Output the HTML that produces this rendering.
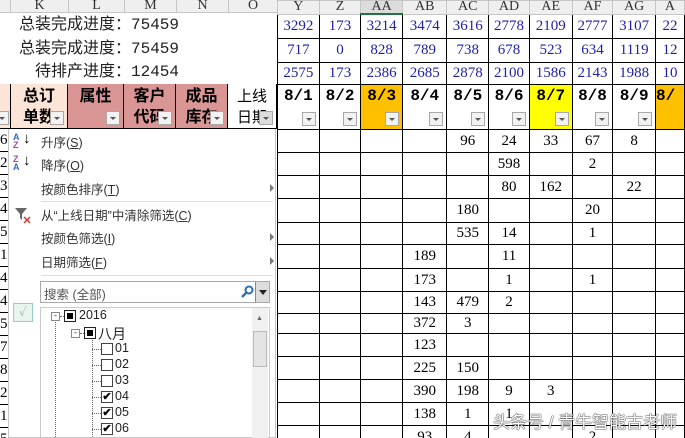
<!DOCTYPE html>
<html style="overflow:hidden;height:438px"><head><meta charset="utf-8"><style>
*{margin:0;padding:0;box-sizing:border-box}
html,body{overflow:hidden}
body{width:685px;height:438px;background:#fff;position:relative;font-family:"Liberation Serif","Noto Serif CJK SC",serif}
.a{position:absolute}
table{border-collapse:collapse;position:absolute;left:277px;top:0;table-layout:fixed}
td{border:1px solid #000;text-align:center;font-size:15px;line-height:16px;padding:0;white-space:nowrap;overflow:hidden;position:relative;color:#000}
tr.h td{background:#efefef;border:1px solid #c6c6c6;color:#333;font-size:14px;line-height:12px}
tr.b td{color:#1f1fa8}
tr.hd td{font-weight:bold;font-size:16px;vertical-align:top;padding-top:3px;font-family:"Liberation Mono","Noto Sans CJK SC",monospace}
.dd{position:absolute;right:3px;bottom:3px;width:14px;height:14px;background:#f2f2f2;border:1px solid #a8a8a8}
.dd:after{content:"";position:absolute;left:3px;top:5px;border-left:3px solid transparent;border-right:3px solid transparent;border-top:3px solid #555}
.lh{font-family:"Liberation Sans","Noto Sans CJK SC",sans-serif;font-size:16px;font-weight:bold;text-align:center;line-height:21px;padding-top:2px;border-right:1px solid #000;border-bottom:1px solid #000;overflow:hidden;white-space:nowrap}
.mi{position:absolute;left:32px;font-family:"Liberation Sans","Noto Sans CJK SC",sans-serif;font-size:12.5px;color:#333}
.ar{position:absolute;left:261px;width:0;height:0;border-top:4px solid transparent;border-bottom:4px solid transparent;border-left:4px solid #777}
.cb{position:absolute;width:12px;height:12px;border:1px solid #444;background:#fff;font-size:11px;line-height:10px;text-align:center;font-weight:bold}
.tl{position:absolute;font-family:"Liberation Sans","Noto Sans CJK SC",sans-serif;font-size:12.5px;color:#222}
</style></head><body>
<div class="a" style="left:0;top:0;width:277px;height:13px;background:#efefef;border-bottom:1px solid #c6c6c6"></div>
<div class="a" style="left:10px;top:0;width:58px;height:13px;border-left:1px solid #c6c6c6;text-align:center;font-size:14px;line-height:12px;color:#333">K</div>
<div class="a" style="left:68px;top:0;width:56px;height:13px;border-left:1px solid #c6c6c6;text-align:center;font-size:14px;line-height:12px;color:#333">L</div>
<div class="a" style="left:124px;top:0;width:52px;height:13px;border-left:1px solid #c6c6c6;text-align:center;font-size:14px;line-height:12px;color:#333">M</div>
<div class="a" style="left:176px;top:0;width:52px;height:13px;border-left:1px solid #c6c6c6;text-align:center;font-size:14px;line-height:12px;color:#333">N</div>
<div class="a" style="left:228px;top:0;width:49px;height:13px;border-left:1px solid #c6c6c6;text-align:center;font-size:14px;line-height:12px;color:#333">O</div>
<div class="a" style="left:0;top:14px;width:277px;font-size:16px;line-height:23.5px;font-family:'Liberation Mono','Noto Sans CJK SC',monospace;color:#222">
<div style="padding-left:19px">总装完成进度：75459</div>
<div style="padding-left:19px">总装完成进度：75459</div>
<div style="padding-left:35px">待排产进度：12454</div></div>
<div class="a lh" style="left:0;top:84px;width:11px;height:45px;background:#fce4d6"><div class="dd" style="right:1px"></div></div>
<div class="a lh" style="left:11px;top:84px;width:57px;height:45px;background:#fce4d6">总订<br>单数<div class="dd"></div></div>
<div class="a lh" style="left:68px;top:84px;width:56px;height:45px;background:#da9694">属性<div class="dd"></div></div>
<div class="a lh" style="left:124px;top:84px;width:52px;height:45px;background:#da9694">客户<br>代码<div class="dd"></div></div>
<div class="a lh" style="left:176px;top:84px;width:52px;height:45px;background:#da9694">成品<br>库存<div class="dd"></div></div>
<div class="a lh" style="left:228px;top:84px;width:49px;height:45px;background:#fff;font-weight:normal;font-size:15px">上线<br>日期<div class="dd" style="background:#ddd"></div></div>
<table>
<colgroup><col style="width:43px"><col style="width:43px"><col style="width:43px"><col style="width:46px"><col style="width:43px"><col style="width:42px"><col style="width:44px"><col style="width:42px"><col style="width:44px"><col style="width:30px"></colgroup>
<tr class="h" style="height:13px"><td>Y</td><td>Z</td><td style="background:#dcdcdc;border-bottom:2px solid #217346">AA</td><td>AB</td><td>AC</td><td>AD</td><td>AE</td><td>AF</td><td>AG</td><td>A</td></tr>
<tr class="b" style="height:24px"><td>3292</td><td>173</td><td>3214</td><td>3474</td><td>3616</td><td>2778</td><td>2109</td><td>2777</td><td>3107</td><td>22</td></tr>
<tr class="b" style="height:24px"><td>717</td><td>0</td><td>828</td><td>789</td><td>738</td><td>678</td><td>523</td><td>634</td><td>1119</td><td>12</td></tr>
<tr class="b" style="height:22px"><td>2575</td><td>173</td><td>2386</td><td>2685</td><td>2878</td><td>2100</td><td>1586</td><td>2143</td><td>1988</td><td>10</td></tr>
<tr class="hd" style="height:45px"><td>8/1<div class="dd"></div></td><td>8/2<div class="dd"></div></td><td style="background:#ffc000">8/3<div class="dd"></div></td><td>8/4<div class="dd"></div></td><td>8/5<div class="dd"></div></td><td>8/6<div class="dd"></div></td><td style="background:#ffff00">8/7<div class="dd"></div></td><td>8/8<div class="dd"></div></td><td>8/9<div class="dd"></div></td><td style="background:#ffc000;text-align:left">8/</td></tr>
<tr style="height:23px"><td></td><td></td><td></td><td></td><td>96</td><td>24</td><td>33</td><td>67</td><td>8</td><td></td></tr>
<tr style="height:23px"><td></td><td></td><td></td><td></td><td></td><td>598</td><td></td><td>2</td><td></td><td></td></tr>
<tr style="height:23px"><td></td><td></td><td></td><td></td><td></td><td>80</td><td>162</td><td></td><td>22</td><td></td></tr>
<tr style="height:24px"><td></td><td></td><td></td><td></td><td>180</td><td></td><td></td><td>20</td><td></td><td></td></tr>
<tr style="height:22px"><td></td><td></td><td></td><td></td><td>535</td><td>14</td><td></td><td>1</td><td></td><td></td></tr>
<tr style="height:24px"><td></td><td></td><td></td><td>189</td><td></td><td>11</td><td></td><td></td><td></td><td></td></tr>
<tr style="height:23px"><td></td><td></td><td></td><td>173</td><td></td><td>1</td><td></td><td>1</td><td></td><td></td></tr>
<tr style="height:22px"><td></td><td></td><td></td><td>143</td><td>479</td><td>2</td><td></td><td></td><td></td><td></td></tr>
<tr style="height:20px"><td></td><td></td><td></td><td>372</td><td>3</td><td></td><td></td><td></td><td></td><td></td></tr>
<tr style="height:23px"><td></td><td></td><td></td><td>123</td><td></td><td></td><td></td><td></td><td></td><td></td></tr>
<tr style="height:23px"><td></td><td></td><td></td><td>225</td><td>150</td><td></td><td></td><td></td><td></td><td></td></tr>
<tr style="height:23px"><td></td><td></td><td></td><td>390</td><td>198</td><td>9</td><td>3</td><td></td><td></td><td></td></tr>
<tr style="height:23px"><td></td><td></td><td></td><td>138</td><td>1</td><td>1</td><td></td><td></td><td></td><td></td></tr>
<tr style="height:23px"><td></td><td></td><td></td><td>93</td><td>4</td><td></td><td></td><td>2</td><td></td><td></td></tr>
</table>
<div class="a" style="left:0;top:129px;width:8px;font-size:15px;line-height:22px;overflow:hidden;height:309px">
<div style="border-bottom:1px solid #000">6</div><div style="border-bottom:1px solid #000">2</div><div style="border-bottom:1px solid #000">3</div><div style="border-bottom:1px solid #000">4</div><div style="border-bottom:1px solid #000">5</div><div style="border-bottom:1px solid #000">1</div><div style="border-bottom:1px solid #000">4</div><div style="border-bottom:1px solid #000">4</div><div style="border-bottom:1px solid #000">5</div><div style="border-bottom:1px solid #000">7</div><div style="border-bottom:1px solid #000">8</div><div style="border-bottom:1px solid #000">2</div><div style="border-bottom:1px solid #000">1</div><div>5</div></div>
<div class="a" style="left:8px;top:129px;width:268px;height:309px;background:#fff;border:1px solid #c6c6c6;border-top:none">
<div class="a" style="left:4px;top:4px;font-size:9px;line-height:8px;color:#36c;font-family:'Liberation Sans',sans-serif;font-weight:bold">A<br><span style="color:#a4a">Z</span></div><div class="a" style="left:14px;top:2px;font-size:15px">↓</div>
<div class="a" style="left:4px;top:26px;font-size:9px;line-height:8px;color:#a4a;font-family:'Liberation Sans',sans-serif;font-weight:bold">Z<br><span style="color:#36c">A</span></div><div class="a" style="left:14px;top:24px;font-size:15px">↓</div>
<div class="mi" style="top:3px">升序(<u>S</u>)</div>
<div class="mi" style="top:26px">降序(<u>O</u>)</div>
<div class="mi" style="top:50px">按颜色排序(<u>T</u>)</div><div class="ar" style="top:55px"></div>
<div class="a" style="left:32px;top:72px;width:232px;height:1px;background:#ddd"></div>
<svg class="a" style="left:5px;top:78px" width="18" height="18"><path d="M1 1H13L8 7V13L6 11V7Z" fill="#666"/><path d="M10 10L16 16M16 10L10 16" stroke="#d33" stroke-width="1.5"/></svg>
<div class="mi" style="top:76px">从“上线日期”中清除筛选(<u>C</u>)</div>
<div class="mi" style="top:99px">按颜色筛选(<u>I</u>)</div><div class="ar" style="top:104px"></div>
<div class="mi" style="top:123px">日期筛选(<u>F</u>)</div><div class="ar" style="top:128px"></div>
<div class="a" style="left:32px;top:146px;width:232px;height:1px;background:#ddd"></div>
<div class="a" style="left:31px;top:152px;width:230px;height:22px;border:1px solid #aaa;background:#fff"><span class="tl" style="left:3px;top:2px;color:#555">搜索 (全部)</span>
<svg class="a" style="left:199px;top:3px" width="14" height="14"><circle cx="9" cy="5" r="3.5" fill="none" stroke="#2a6fb0" stroke-width="2"/><path d="M6.5 7.5L2 12" stroke="#2a6fb0" stroke-width="2.5"/></svg>
<div class="a" style="left:214px;top:0;width:14px;height:20px;background:#ddd;border-left:1px solid #888"><div style="margin:8px 0 0 3px;border-left:4px solid transparent;border-right:4px solid transparent;border-top:5px solid #222;width:0"></div></div></div>
<div class="a" style="left:4px;top:174px;width:20px;height:19px;border:1px solid #9cc;background:#e8f4ee;color:#8a8;font-size:12px;text-align:center;line-height:17px">✓</div>
<div class="a" style="left:31px;top:178px;width:230px;height:135px;border:1px solid #ccc;border-bottom:none">
<div class="a" style="left:211px;top:0;width:16px;height:135px;background:#f0f0f0"></div>
<div class="a" style="left:215px;top:6px;font-size:7px;color:#666">▲</div>
<div class="a" style="left:212px;top:23px;width:14px;height:36px;background:#e4e4e4;border:1px solid #bbb"></div>
<div class="a" style="left:14px;top:12px;width:0;height:123px;border-left:1px dotted #666"></div>
<div class="a" style="left:51px;top:30px;width:0;height:105px;border-left:1px dotted #666"></div>
<div class="a" style="left:10px;top:4px;width:9px;height:9px;border:1px solid #888;font-size:8px;line-height:6px;text-align:center">-</div>
<div class="a" style="left:19px;top:8px;width:4px;border-top:1px dotted #666"></div>
<div class="cb" style="left:23px;top:2px;border-color:#222"><div style="margin:2px;width:6px;height:6px;background:#000"></div></div>
<div class="tl" style="left:38px;top:0px">2016</div>
<div class="a" style="left:30px;top:21px;width:9px;height:9px;border:1px solid #888;font-size:8px;line-height:6px;text-align:center">-</div>
<div class="a" style="left:39px;top:25px;width:4px;border-top:1px dotted #666"></div>
<div class="cb" style="left:43px;top:19px;border-color:#222"><div style="margin:2px;width:6px;height:6px;background:#000"></div></div>
<div class="tl" style="left:57px;top:16px;font-size:14px">八月</div>
<div class="a" style="left:51px;top:41px;width:9px;border-top:1px dotted #666"></div><div class="cb" style="left:60px;top:35px"></div><div class="tl" style="left:74px;top:33px">01</div>
<div class="a" style="left:51px;top:57px;width:9px;border-top:1px dotted #666"></div><div class="cb" style="left:60px;top:51px"></div><div class="tl" style="left:74px;top:49px">02</div>
<div class="a" style="left:51px;top:73px;width:9px;border-top:1px dotted #666"></div><div class="cb" style="left:60px;top:67px"></div><div class="tl" style="left:74px;top:65px">03</div>
<div class="a" style="left:51px;top:89px;width:9px;border-top:1px dotted #666"></div><div class="cb" style="left:60px;top:83px">✔</div><div class="tl" style="left:74px;top:81px">04</div>
<div class="a" style="left:51px;top:105px;width:9px;border-top:1px dotted #666"></div><div class="cb" style="left:60px;top:99px">✔</div><div class="tl" style="left:74px;top:97px">05</div>
<div class="a" style="left:51px;top:121px;width:9px;border-top:1px dotted #666"></div><div class="cb" style="left:60px;top:115px">✔</div><div class="tl" style="left:74px;top:113px">06</div>
</div></div>
<div class="a" style="left:493px;top:408px;font-family:'Liberation Sans','Noto Sans CJK SC',sans-serif;font-size:17px;color:#fff;text-shadow:0 0 1px #333,0 0 1px #333,0 0 1px #333">头条号 / 青牛智能古老师</div>
</body></html>
